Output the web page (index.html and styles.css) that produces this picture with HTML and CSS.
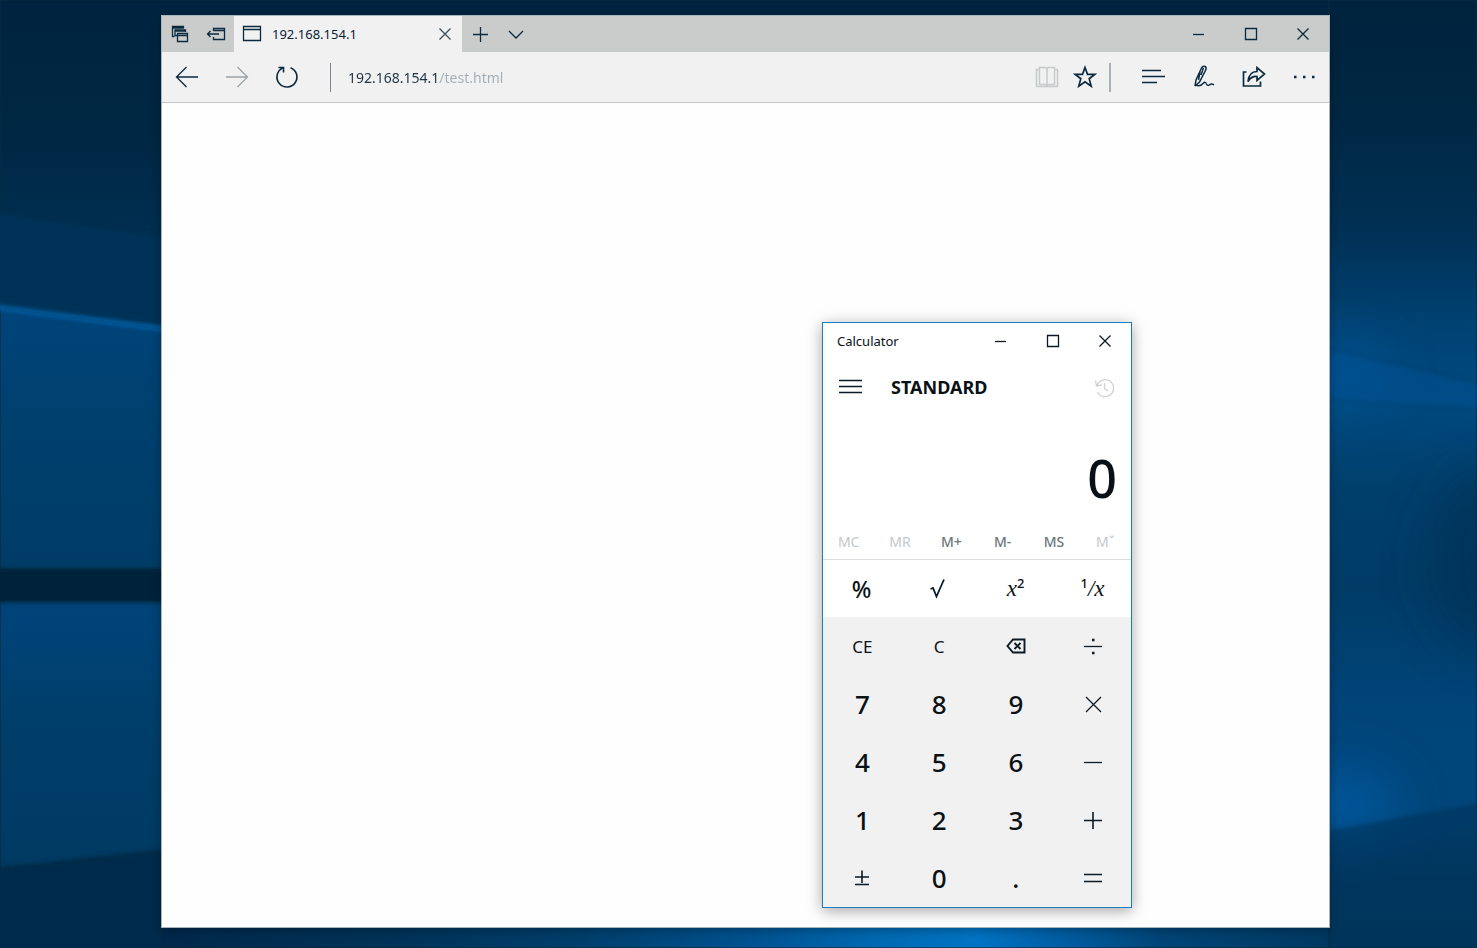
FILE: index.html
```html
<!DOCTYPE html>
<html lang="en">
<head>
<meta charset="utf-8">
<title>Desktop</title>
<link rel="stylesheet" href="styles.css">
</head>
<body>
<div class="desktop">
  <svg class="wallpaper" viewBox="0 0 1477 948" preserveAspectRatio="none" aria-hidden="true">
    <defs>
      <linearGradient id="sky" x1="0" y1="0" x2="0" y2="1">
        <stop offset="0" stop-color="#002440"/>
        <stop offset="0.14" stop-color="#002743"/>
        <stop offset="0.24" stop-color="#002e50"/>
        <stop offset="0.34" stop-color="#003c66"/>
        <stop offset="1" stop-color="#003c66"/>
      </linearGradient>
      <linearGradient id="paneTop" x1="0" y1="0" x2="0" y2="1">
        <stop offset="0" stop-color="#00447a"/>
        <stop offset="0.3" stop-color="#004171"/>
        <stop offset="1" stop-color="#003c66"/>
      </linearGradient>
      <linearGradient id="paneLow" x1="0" y1="0" x2="0" y2="1">
        <stop offset="0" stop-color="#00447a"/>
        <stop offset="0.5" stop-color="#003e69"/>
        <stop offset="1" stop-color="#003a63"/>
      </linearGradient>
      <linearGradient id="right" x1="0" y1="0" x2="0" y2="1">
        <stop offset="0" stop-color="#00233d"/>
        <stop offset="0.12" stop-color="#002743"/>
        <stop offset="0.24" stop-color="#003054"/>
        <stop offset="0.34" stop-color="#004272"/>
        <stop offset="0.42" stop-color="#004a80"/>
        <stop offset="0.52" stop-color="#003f6b"/>
        <stop offset="0.62" stop-color="#003c66"/>
        <stop offset="0.75" stop-color="#00457a"/>
        <stop offset="0.86" stop-color="#00467a"/>
        <stop offset="0.92" stop-color="#003a64"/>
        <stop offset="1" stop-color="#003358"/>
      </linearGradient>
      <linearGradient id="floor" x1="0" y1="0" x2="1" y2="0">
        <stop offset="0" stop-color="#00284a"/>
        <stop offset="0.2" stop-color="#003358"/>
        <stop offset="0.36" stop-color="#003f6d"/>
        <stop offset="0.5" stop-color="#005290"/>
        <stop offset="0.6" stop-color="#0068b0"/>
        <stop offset="0.69" stop-color="#0074c4"/>
        <stop offset="0.76" stop-color="#005ea4"/>
        <stop offset="0.85" stop-color="#004476"/>
        <stop offset="1" stop-color="#003861"/>
      </linearGradient>
      <filter id="soft" x="-100%" y="-100%" width="300%" height="300%"><feGaussianBlur stdDeviation="24"/></filter>
      <filter id="edge" x="-10%" y="-50%" width="120%" height="200%"><feGaussianBlur stdDeviation="2"/></filter>
    </defs>
    <rect width="1477" height="948" fill="url(#sky)"/>
    <path d="M-20 210 L200 241 V330 L-20 305Z" fill="#003358" filter="url(#edge)"/>
    <path d="M0 308 L170 330 V570 H0Z" fill="url(#paneTop)"/>
    <path d="M0 600 H170 V852 L0 870Z" fill="url(#paneLow)"/>
    <path d="M-20 870 L200 846 V980 H-20Z" fill="#002b4b" filter="url(#edge)"/>
    <rect x="-20" y="569" width="210" height="33" fill="#00203a" filter="url(#edge)"/>
    <path d="M-20 305 L190 332" stroke="#0068b4" stroke-width="4" filter="url(#edge)"/>
    <rect x="161" y="915" width="1180" height="33" fill="url(#floor)"/>
    <rect x="1329" width="148" height="948" fill="url(#right)"/>
    <ellipse cx="1345" cy="372" rx="45" ry="30" fill="#005ca5" opacity=".6" filter="url(#soft)"/>
    <path d="M1320 346 L1497 388 V410 L1320 400Z" fill="#005090" opacity=".5" filter="url(#edge)"/>
    <ellipse cx="1490" cy="560" rx="60" ry="90" fill="#002f52" opacity=".6" filter="url(#soft)"/>
    <ellipse cx="1340" cy="805" rx="60" ry="40" fill="#005ca5" opacity=".7" filter="url(#soft)"/>
    <path d="M1329 832 L1497 801 V980 H1329Z" fill="#00355c" opacity=".6" filter="url(#edge)"/>
  </svg>

  <main class="window browser">
    <header class="tabstrip">
      <button class="strip-btn" aria-label="Tabs you've set aside">
        <svg width="18" height="18" viewBox="0 0 18 18"><path d="M3.500 11.500H1.500V1.500H12.500V3.500M1.500 3H12.500M6 10.500H4V5H14.500V7M4 6H14.500M6.500 8.500H16.500V16.500H6.500ZM6.500 10.500H16.500"/></svg>
      </button>
      <button class="strip-btn" aria-label="Set these tabs aside">
        <svg width="20" height="18" viewBox="0 0 20 18"><path d="M7.500 6V3.500H18.500V14.500H7.500V12M7.500 5.500H18.500M1.500 9H13M4.500 6L1.500 9L4.500 12"/></svg>
      </button>
      <div class="tab">
        <svg width="20" height="18" viewBox="0 0 20 18"><path d="M1.500 1.500H18.500V15.500H1.500ZM1.500 4.500H18.500"/></svg>
        <span class="tab-title">192.168.154.1</span>
        <button class="tab-close" aria-label="Close tab">
          <svg width="14" height="14" viewBox="0 0 14 14"><path d="M1.500 1.500L12.500 12.500M12.500 1.500L1.500 12.500"/></svg>
        </button>
      </div>
      <button class="strip-btn" aria-label="New tab">
        <svg width="18" height="18" viewBox="0 0 18 18"><path d="M9.500 2V17M2 9.500H17"/></svg>
      </button>
      <button class="strip-btn" aria-label="Show tab previews">
        <svg width="18" height="18" viewBox="0 0 18 18"><path d="M2 6L9 13L16 6"/></svg>
      </button>
      <div class="caption">
        <button class="caption-btn" aria-label="Minimize"><svg width="14" height="14" viewBox="0 0 14 14"><path d="M1 7.500H12"/></svg></button>
        <button class="caption-btn" aria-label="Maximize"><svg width="14" height="14" viewBox="0 0 14 14"><path d="M1.500 1.500H12.500V12.500H1.500Z"/></svg></button>
        <button class="caption-btn" aria-label="Close"><svg width="14" height="14" viewBox="0 0 14 14"><path d="M1.500 1.500L12.500 12.500M12.500 1.500L1.500 12.500"/></svg></button>
      </div>
    </header>

    <nav class="toolbar" aria-label="Navigation">
      <button class="tool" aria-label="Back"><svg width="24" height="24" viewBox="0 0 24 24"><path d="M1.500 12H23M11.500 2L1.500 12L11.500 22"/></svg></button>
      <button class="tool faded" aria-label="Forward" disabled><svg width="24" height="24" viewBox="0 0 24 24"><path d="M1 12H22.500M12.500 2L22.500 12L12.500 22"/></svg></button>
      <button class="tool" aria-label="Refresh"><svg width="24" height="24" viewBox="0 0 24 24"><path d="M15.500 2.700A10 10 0 1 1 7.500 3.100M3.500 2.500H8.500V7.500" stroke-width="1.600"/></svg></button>
      <span class="divider"></span>
      <input class="address" type="text" aria-label="Address" value="192.168.154.1/test.html" spellcheck="false">
      <button class="tool small pale" aria-label="Reading view"><svg width="24" height="24" viewBox="0 0 24 24"><path d="M4.500 3.500V2.500H10Q12 2.500 12 4.500Q12 2.500 14 2.500H19.500V19.500H14Q12 19.500 12 21.500Q12 19.500 10 19.500H4.500V3.500M12 4V21M4.500 4.500H1.500V21.500H22.500V4.500H19.500" stroke-width="1.500"/></svg></button>
      <button class="tool small" aria-label="Add to favorites"><svg width="24" height="24" viewBox="0 0 24 24"><path d="M12 2.500L14.500 9.300H22L16.200 13.700L18.200 21.200L12 16.700L5.800 21.200L7.800 13.700L2 9.300H9.500Z" stroke-width="1.700"/></svg></button>
      <span class="divider end"></span>
      <button class="tool" aria-label="Hub"><svg width="24" height="24" viewBox="0 0 24 24"><path d="M0 5.500H19M0 11.500H23M0 17.500H15" stroke-width="1.600"/></svg></button>
      <button class="tool" aria-label="Make a web note"><svg width="24" height="24" viewBox="0 0 24 24"><path d="M3 21L4 15L9.500 3Q11 0.500 13 1.500Q15 2.500 13.500 5.500L7.500 17L3 21M8 7L6.500 15M11.500 3L9 10M3.500 20Q8 22 11 18.500Q13.500 16 14.500 19Q15.500 21.500 18 19.500Q20 18.500 22 20" stroke-width="1.500"/></svg></button>
      <button class="tool" aria-label="Share"><svg width="24" height="24" viewBox="0 0 24 24"><path d="M4.500 7H1.500V21H18.500V16.500M6 16.500Q7 6.500 15 6.500V2.500L22.500 9L15 15.500V11.500Q9.500 11 6 16.500Z" stroke-width="1.700"/></svg></button>
      <button class="tool" aria-label="More"><svg width="24" height="24" viewBox="0 0 24 24"><path d="M2 12H4.500M11 12H13.500M20 12H22.500" stroke-width="2.400"/></svg></button>
    </nav>
    <section class="page" aria-label="Page content"></section>
  </main>

  <section class="window calculator" aria-label="Calculator">
    <header class="titlebar">
      <span class="app-name">Calculator</span>
      <div class="caption">
        <button class="caption-btn" aria-label="Minimize"><svg width="14" height="14" viewBox="0 0 14 14"><path d="M1 7.500H12"/></svg></button>
        <button class="caption-btn" aria-label="Maximize"><svg width="14" height="14" viewBox="0 0 14 14"><path d="M1.500 1.500H12.500V12.500H1.500Z"/></svg></button>
        <button class="caption-btn" aria-label="Close"><svg width="14" height="14" viewBox="0 0 14 14"><path d="M1.500 1.500L12.500 12.500M12.500 1.500L1.500 12.500"/></svg></button>
      </div>
    </header>
    <div class="mode">
      <button class="menu" aria-label="Menu"><svg width="24" height="16" viewBox="0 0 24 16"><path d="M0 1.500H23M0 7.500H23M0 13.500H23" stroke-width="1.500"/></svg></button>
      <h1 class="mode-name">STANDARD</h1>
      <button class="history" aria-label="History"><svg width="22" height="24" viewBox="0 0 22 24"><path d="M4 10.500A8.500 8.500 0 1 1 4.500 17M2.500 5.500L3.500 11L9 10M11.500 8V13.500L15 16"/></svg></button>
    </div>
    <output class="result">0</output>
    <div class="memory">
      <button disabled>MC</button>
      <button disabled>MR</button>
      <button>M+</button>
      <button>M-</button>
      <button>MS</button>
      <button disabled>Mˇ</button>
    </div>
    <div class="keys functions">
      <button class="percent">%</button>
      <button aria-label="Square root"><svg width="20" height="24" viewBox="0 0 20 24"><path d="M1.500 12L4 11L7.500 19.500L15 2.500" stroke-width="1.800"/></svg></button>
      <button class="math"><i>x</i><sup>2</sup></button>
      <button class="math"><sup>1</sup><span class="slash">/</span><i>x</i></button>
    </div>
    <div class="keys pad">
      <button class="clear">CE</button>
      <button class="clear">C</button>
      <button aria-label="Backspace"><svg width="20" height="16" viewBox="0 0 20 16"><path d="M7 1.500H18.500V14.500H7L1.500 8ZM8.500 5L14.500 11M14.500 5L8.500 11" stroke-width="1.900"/></svg></button>
      <button aria-label="Divide"><svg width="20" height="20" viewBox="0 0 20 20"><path d="M1 10.500H19"/><path d="M9 4H11.500M9 17H11.500" stroke-width="2.500"/></svg></button>
      <button>7</button>
      <button>8</button>
      <button>9</button>
      <button aria-label="Multiply"><svg width="20" height="20" viewBox="0 0 20 20"><path d="M3 3L18 18M18 3L3 18"/></svg></button>
      <button>4</button>
      <button>5</button>
      <button>6</button>
      <button aria-label="Subtract"><svg width="20" height="20" viewBox="0 0 20 20"><path d="M1 10.500H19"/></svg></button>
      <button>1</button>
      <button>2</button>
      <button>3</button>
      <button aria-label="Add"><svg width="20" height="20" viewBox="0 0 20 20"><path d="M1 10.500H19M10 2V19" stroke-width="1.600"/></svg></button>
      <button aria-label="Plus or minus"><svg width="20" height="20" viewBox="0 0 20 20"><path d="M3 9H17M3 16.500H17M10 2.500V15" stroke-width="1.600"/></svg></button>
      <button>0</button>
      <button>.</button>
      <button aria-label="Equals"><svg width="20" height="20" viewBox="0 0 20 20"><path d="M1 6.500H19M1 13.500H19"/></svg></button>
    </div>
  </section>
</div>
</body>
</html>
```
FILE: styles.css
```css
* { box-sizing: border-box; }

body {
  margin: 0;
  font-family: "Noto Sans", "Open Sans", sans-serif;
  font-size: 14px;
  color: #0b2233;
}

button {
  display: flex;
  align-items: center;
  justify-content: center;
  margin: 0;
  padding: 0;
  border: 0;
  background: none;
  color: inherit;
  font: inherit;
}

svg {
  display: block;
  fill: none;
  stroke: #0b2a40;
  stroke-width: 1.300;
}

.desktop {
  position: relative;
  min-height: 100vh;
  overflow: hidden;
  background: #00243f;
}

.wallpaper {
  position: absolute;
  inset: 0;
  width: 100%;
  height: 100%;
}

.window {
  position: absolute;
  display: flex;
  flex-direction: column;
}

/* Browser */
.browser {
  inset: 15px 147px 20px 161px;
  border: 1px solid #a9b4bb;
  background: #fefefe;
  box-shadow: 0 2px 10px rgba(0, 0, 0, 0.3);
}

.tabstrip {
  display: flex;
  height: 36px;
  background: #cacccb;
}

.strip-btn { width: 36px; }

.tab {
  display: flex;
  align-items: center;
  gap: 10px;
  width: 228px;
  padding: 0 10px 0 8px;
  background: #f1f1f1;
}

.tab-title {
  flex: 1;
  font-size: 13px;
}

.tab-close svg { stroke: #3c4f5c; }

.caption {
  display: flex;
  margin-left: auto;
}

.caption-btn { width: 52px; }

.toolbar {
  display: flex;
  align-items: center;
  height: 51px;
  border-bottom: 1px solid #c8c8c8;
  background: #f1f1f1;
}

.tool {
  width: 50px;
  height: 50px;
}

.tool.small { width: 38px; }
.faded svg { stroke: #9aa3a8; }
.pale svg { stroke: #c6caca; }

.divider {
  width: 1px;
  height: 29px;
  margin: 0 17px 0 18px;
  background: #7d868c;
}

.divider.end {
  width: 2px;
  margin: 0 18px 0 5px;
  background: #a9b1b8;
}

.address {
  flex: 1;
  min-width: 0;
  padding: 0;
  border: 0;
  outline: 0;
  font: inherit;
  color: transparent;
  background: linear-gradient(to right, #1d3444 91px, #a3adb3 91px);
  -webkit-background-clip: text;
  background-clip: text;
}

.page { flex: 1; }

/* Calculator */
.calculator {
  left: 822px;
  top: 322px;
  width: 310px;
  border: 1px solid #1a7dc0;
  background: #fff;
  color: #0a1116;
  box-shadow: 0 3px 14px rgba(0, 0, 0, 0.35);
}

.calculator svg { stroke: #0a1a26; }

.titlebar {
  display: flex;
  align-items: center;
  height: 36px;
  padding-left: 14px;
}

.titlebar .caption { height: 36px; }
.app-name { font-size: 13px; }

.mode {
  display: flex;
  align-items: center;
  height: 56px;
  padding: 0 16px;
}

.mode-name {
  flex: 1;
  margin: 0 0 0 28px;
  font-size: 18px;
  font-weight: 700;
}

.calculator .history svg { stroke: #d0d2d2; }

.result {
  height: 108px;
  padding-right: 14px;
  font-size: 52px;
  font-weight: 500;
  line-height: 126px;
  text-align: right;
}

.memory {
  display: grid;
  grid-template-columns: repeat(6, 1fr);
  height: 37px;
  border-bottom: 1px solid #dcdcdc;
  font-size: 14px;
  font-weight: 500;
  color: #6d777c;
}

.memory button:disabled {
  font-weight: 400;
  color: #c4c8c9;
}

.keys {
  display: grid;
  grid-template-columns: repeat(4, 1fr);
  grid-auto-rows: 58px;
  font-size: 26px;
  font-weight: 500;
}

.functions { grid-auto-rows: 57px; }

.pad {
  padding-left: 1px;
  background: #f1f1f1;
}

.percent { font-size: 23px; }

.clear {
  font-size: 17px;
  font-weight: 400;
}

.math {
  font-family: "Liberation Serif", serif;
  font-size: 23px;
  font-weight: 400;
}

.math sup {
  align-self: flex-start;
  margin-top: 14px;
  font-family: "Noto Sans", sans-serif;
  font-size: 13px;
  font-weight: 500;
}

.slash { font-style: italic; }
```
